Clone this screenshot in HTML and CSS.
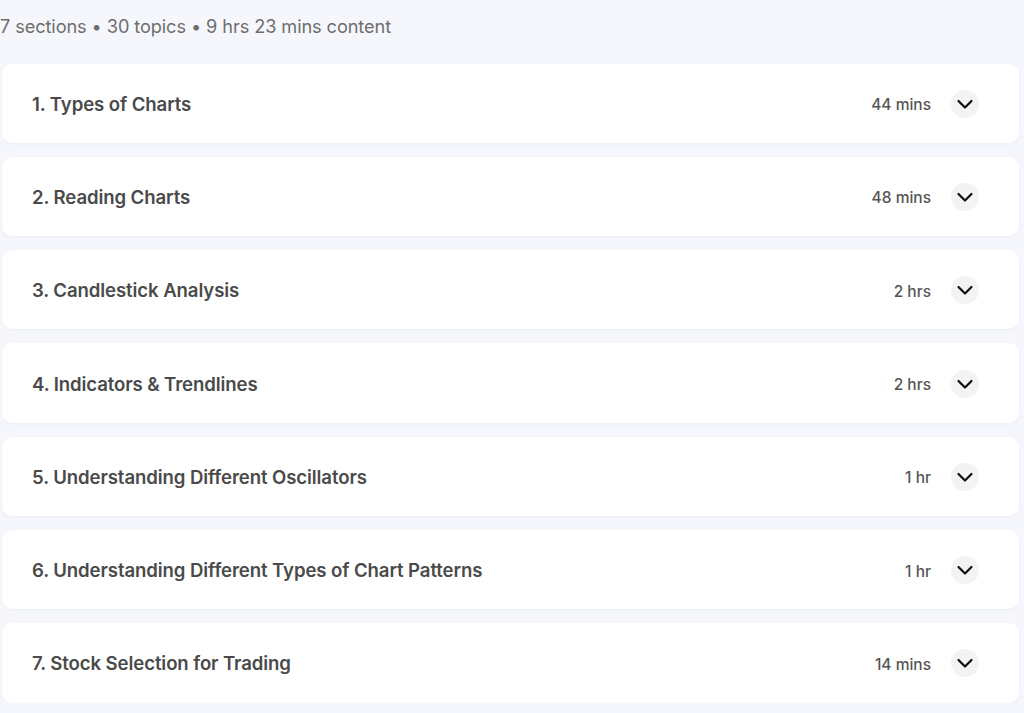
FILE: index.html
```html
<!DOCTYPE html>
<html lang="en">
<head>
  <meta charset="UTF-8">
  <title>Course content</title>
  <link rel="stylesheet" href="styles.css">
</head>
<body>

  <div class="course">
    <div class="course-meta">7 sections &bull; 30 topics &bull; 9 hrs 23 mins content</div>

    <div class="section-list">
      <div class="section-card">
        <div class="section-title">1. Types of Charts</div>
        <div class="section-right">
          <span class="section-time">44 mins</span>
          <button class="chevron" title="Expand"><svg viewBox="0 0 24 24" width="24" height="24"><path d="M5.5 9l6.5 6.5 6.5-6.5" fill="none" stroke="#111" stroke-width="2.2" stroke-linecap="round" stroke-linejoin="round"/></svg></button>
        </div>
      </div>
      <div class="section-card">
        <div class="section-title">2. Reading Charts</div>
        <div class="section-right">
          <span class="section-time">48 mins</span>
          <button class="chevron" title="Expand"><svg viewBox="0 0 24 24" width="24" height="24"><path d="M5.5 9l6.5 6.5 6.5-6.5" fill="none" stroke="#111" stroke-width="2.2" stroke-linecap="round" stroke-linejoin="round"/></svg></button>
        </div>
      </div>
      <div class="section-card">
        <div class="section-title">3. Candlestick Analysis</div>
        <div class="section-right">
          <span class="section-time">2 hrs</span>
          <button class="chevron" title="Expand"><svg viewBox="0 0 24 24" width="24" height="24"><path d="M5.5 9l6.5 6.5 6.5-6.5" fill="none" stroke="#111" stroke-width="2.2" stroke-linecap="round" stroke-linejoin="round"/></svg></button>
        </div>
      </div>
      <div class="section-card">
        <div class="section-title">4. Indicators &amp; Trendlines</div>
        <div class="section-right">
          <span class="section-time">2 hrs</span>
          <button class="chevron" title="Expand"><svg viewBox="0 0 24 24" width="24" height="24"><path d="M5.5 9l6.5 6.5 6.5-6.5" fill="none" stroke="#111" stroke-width="2.2" stroke-linecap="round" stroke-linejoin="round"/></svg></button>
        </div>
      </div>
      <div class="section-card">
        <div class="section-title">5. Understanding Different Oscillators</div>
        <div class="section-right">
          <span class="section-time">1 hr</span>
          <button class="chevron" title="Expand"><svg viewBox="0 0 24 24" width="24" height="24"><path d="M5.5 9l6.5 6.5 6.5-6.5" fill="none" stroke="#111" stroke-width="2.2" stroke-linecap="round" stroke-linejoin="round"/></svg></button>
        </div>
      </div>
      <div class="section-card">
        <div class="section-title">6. Understanding Different Types of Chart Patterns</div>
        <div class="section-right">
          <span class="section-time">1 hr</span>
          <button class="chevron" title="Expand"><svg viewBox="0 0 24 24" width="24" height="24"><path d="M5.5 9l6.5 6.5 6.5-6.5" fill="none" stroke="#111" stroke-width="2.2" stroke-linecap="round" stroke-linejoin="round"/></svg></button>
        </div>
      </div>
      <div class="section-card">
        <div class="section-title">7. Stock Selection for Trading</div>
        <div class="section-right">
          <span class="section-time">14 mins</span>
          <button class="chevron" title="Expand"><svg viewBox="0 0 24 24" width="24" height="24"><path d="M5.5 9l6.5 6.5 6.5-6.5" fill="none" stroke="#111" stroke-width="2.2" stroke-linecap="round" stroke-linejoin="round"/></svg></button>
        </div>
      </div>
    </div>
  </div>

</body>
</html>
```

FILE: styles.css
```css
body {
  margin: 0;
  background-color: #f6f7fc;
  font-family: Inter, "Noto Sans", sans-serif;
  color: #4b4b4b;
}

.course {
  padding: 0 5px 0 2px;
}

.course-meta {
  margin-left: -2px;
  padding-top: 14px;
  height: 63.5px;
  box-sizing: border-box;
  font-size: 18.2px;
  line-height: 24px;
  color: #6e6e6e;
  letter-spacing: -0.1px;
}

.section-list {
  display: flex;
  flex-direction: column;
  gap: 14px;
}

.section-card {
  display: flex;
  align-items: center;
  justify-content: space-between;
  height: 79.3px;
  padding: 1px 40px 0 30px;
  box-sizing: border-box;
  background-color: #fff;
  border-radius: 10px;
  box-shadow: 0 1px 3px rgba(120, 125, 170, 0.08);
}

.section-title {
  font-size: 18.6px;
  font-weight: 600;
  color: #4a4a4a;
  letter-spacing: -0.1px;
}

.section-right {
  display: flex;
  align-items: center;
  gap: 20px;
}

.section-time {
  font-size: 15.5px;
  font-weight: 500;
  color: #555;
  padding-top: 2px;
}

.chevron {
  width: 28px;
  height: 28px;
  padding: 0;
  border: none;
  border-radius: 50%;
  background-color: #f3f3f3;
  display: flex;
  align-items: center;
  justify-content: center;
  cursor: pointer;
}
```
